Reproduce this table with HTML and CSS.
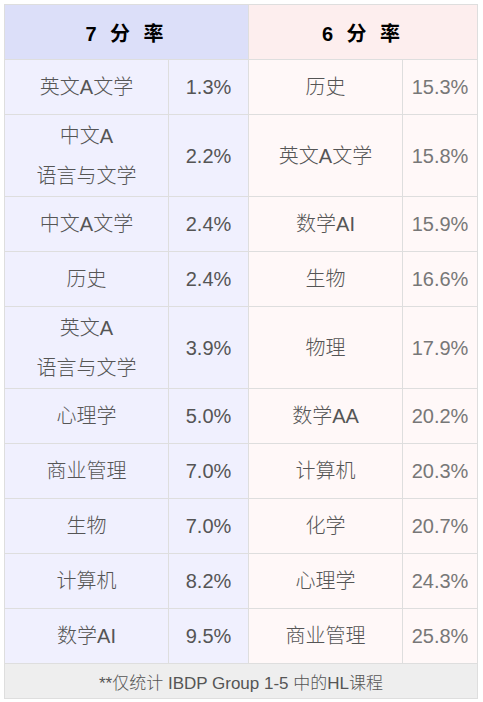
FILE: index.html
```html
<!DOCTYPE html>
<html lang="zh-CN">
<head>
<meta charset="utf-8">
<title>IB 7分率 6分率</title>
<link rel="stylesheet" href="styles.css">
</head>
<body>
<div class="grid">
  <div class="head head-7">7&nbsp;分&nbsp;率</div>
  <div class="head head-6">6&nbsp;分&nbsp;率</div>

  <div class="c l">英文A文学</div><div class="c l">1.3%</div><div class="c r">历史</div><div class="c r pct">15.3%</div>
  <div class="c l two">中文A<br>语言与文学</div><div class="c l">2.2%</div><div class="c r">英文A文学</div><div class="c r pct">15.8%</div>
  <div class="c l">中文A文学</div><div class="c l">2.4%</div><div class="c r">数学AI</div><div class="c r pct">15.9%</div>
  <div class="c l">历史</div><div class="c l">2.4%</div><div class="c r">生物</div><div class="c r pct">16.6%</div>
  <div class="c l two">英文A<br>语言与文学</div><div class="c l">3.9%</div><div class="c r">物理</div><div class="c r pct">17.9%</div>
  <div class="c l">心理学</div><div class="c l">5.0%</div><div class="c r">数学AA</div><div class="c r pct">20.2%</div>
  <div class="c l">商业管理</div><div class="c l">7.0%</div><div class="c r">计算机</div><div class="c r pct">20.3%</div>
  <div class="c l">生物</div><div class="c l">7.0%</div><div class="c r">化学</div><div class="c r pct">20.7%</div>
  <div class="c l">计算机</div><div class="c l">8.2%</div><div class="c r">心理学</div><div class="c r pct">24.3%</div>
  <div class="c l">数学AI</div><div class="c l">9.5%</div><div class="c r">商业管理</div><div class="c r pct">25.8%</div>

  <div class="foot">**仅统计 IBDP Group 1-5 中的HL课程</div>
</div>
</body>
</html>
```

FILE: styles.css
```css
html, body {
  margin: 0;
  padding: 0;
  background: #ffffff;
}
body {
  padding: 4px;
  font-family: "Liberation Sans", Arial, "Noto Sans CJK SC", sans-serif;
}
.grid {
  display: grid;
  grid-template-columns: 163px 79px 153px 74px;
  gap: 1px;
  padding: 1px;
  background: #dedede;
  width: max-content;
}
.head {
  grid-column: span 2;
  height: 54px;
  display: flex;
  align-items: center;
  justify-content: center;
  font-size: 20px;
  font-weight: bold;
  color: #000;
  letter-spacing: 4px;
}
.head-7 { background: #dcdff9; }
.head-6 { background: #fdeeee; }
.c {
  min-height: 54px;
  display: flex;
  align-items: center;
  justify-content: center;
  text-align: center;
  font-size: 20px;
  font-weight: 300;
  line-height: 40px;
  color: #555;
}
.c.two {
  padding: 0.5px 0;
}
.l { background: #f0f0fe; }
.r { background: #fff8f8; }
.pct { color: #777; }
.foot {
  grid-column: 1 / -1;
  height: 34px;
  display: flex;
  align-items: center;
  justify-content: center;
  background: #eeeeee;
  font-size: 17px;
  font-weight: 300;
  color: #555;
}
```
